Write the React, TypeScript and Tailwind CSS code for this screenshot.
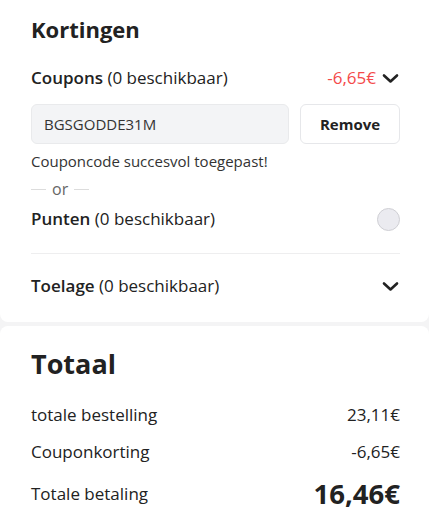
import React from "react";

function Chevron() {
  return (
    <svg width="17" height="11" viewBox="0 0 17 11" fill="none">
      <path d="M2 2.5 L8.5 8.5 L15 2.5" stroke="#222" strokeWidth="2.6" strokeLinecap="round" strokeLinejoin="round" />
    </svg>
  );
}

export default function App() {
  return (
    <div className="w-[429px] h-[521px] bg-[#f4f4f5] overflow-hidden text-[#222]" style={{ fontFamily: '"Open Sans", sans-serif' }}>
      <div className="bg-white rounded-b-lg pl-[31px] pr-[29px] pt-[14px] pb-[24px]">
        <div className="text-[22px] font-bold leading-[30px]">Kortingen</div>
        <div className="mt-[22px] flex items-center justify-between h-[24px]">
          <div className="text-[17px]">
            <span className="font-semibold">Coupons</span> (0 beschikbaar)
          </div>
          <div className="flex items-center gap-[6px] pr-[1px]">
            <span className="text-[17px] text-[#f44a4a]">-6,65€</span>
            <Chevron />
          </div>
        </div>
        <div className="mt-[14px] flex gap-[11px]">
          <div className="flex-1 h-[40px] bg-[#f3f4f6] border border-[#e9eaec] rounded-md flex items-center pl-[12px] text-[15px] text-[#333]">
            BGSGODDE31M
          </div>
          <div className="w-[100px] h-[40px] bg-white border border-[#e6e7ea] rounded-md flex items-center justify-center text-[15px] font-bold">
            Remove
          </div>
        </div>
        <div className="mt-[7px] text-[15px] leading-[20px] text-[#333]">Couponcode succesvol toegepast!</div>
        <div className="mt-[8px] flex items-center gap-[6px] h-[20px]">
          <div className="w-[15px] h-px bg-[#dcdcdc]" />
          <span className="text-[16px] text-[#666] leading-[20px]">or</span>
          <div className="w-[15px] h-px bg-[#dcdcdc]" />
        </div>
        <div className="mt-[8px] flex items-center justify-between h-[24px]">
          <div className="text-[17px]">
            <span className="font-semibold">Punten</span> (0 beschikbaar)
          </div>
          <div className="w-[23px] h-[23px] rounded-full bg-[#ebebf0] border border-[#cfcfd4]" />
        </div>
        <div className="mt-[22px] h-px bg-[#eeeeef]" />
        <div className="mt-[20px] flex items-center justify-between h-[24px]">
          <div className="text-[17px]">
            <span className="font-semibold">Toelage</span> (0 beschikbaar)
          </div>
          <div className="pr-[1px]">
            <Chevron />
          </div>
        </div>
      </div>
      <div className="mt-[4px] bg-white rounded-t-lg pl-[31px] pr-[29px] pt-[20px] pb-[20px] h-[200px]">
        <div className="text-[27px] font-bold leading-[36px]">Totaal</div>
        <div className="mt-[21px] flex items-center justify-between h-[24px] text-[17px]">
          <span>totale bestelling</span>
          <span>23,11€</span>
        </div>
        <div className="mt-[13px] flex items-center justify-between h-[24px] text-[17px]">
          <span>Couponkorting</span>
          <span>-6,65€</span>
        </div>
        <div className="mt-[13px] flex items-center justify-between h-[34px]">
          <span className="text-[17px]">Totale betaling</span>
          <span className="text-[27.5px] font-bold">16,46€</span>
        </div>
      </div>
    </div>
  );
}
